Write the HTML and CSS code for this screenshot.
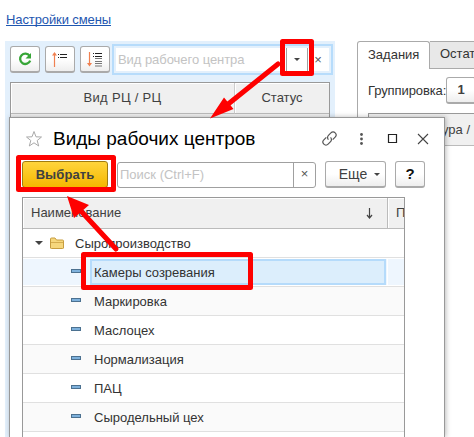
FILE: index.html
```html
<!DOCTYPE html>
<html lang="ru">
<head>
<meta charset="utf-8">
<title>Виды рабочих центров</title>
<link rel="stylesheet" href="styles.css">
</head>
<body>
<a class="settings" href="#"><span>Настройки смены</span></a>
<main class="workspace">
  <section class="centers">
    <div class="toolbar">
      <button class="btn"><svg width="16" height="16" viewBox="0 0 16 16"><path d="M12.600 4.800A5.200 5.200 0 1 0 13.200 9.600" fill="none" stroke="#37a637" stroke-width="2.300"/><path d="M14 2v5.500H8.500z" fill="#37a637"/></svg></button>
      <button class="btn"><svg width="18" height="18" viewBox="0 0 18 18"><path d="M3.500 17V3" stroke="#f08050" stroke-width="1.200"/><path d="M1 5.500h5L3.500 2z" fill="#f08050"/><path d="M7 4.500h1M9 4.500h7M7 7.500h1M9 7.500h7" stroke="#222"/></svg></button>
      <button class="btn"><svg width="18" height="18" viewBox="0 0 18 18"><path d="M3.500 2v13" stroke="#f08050" stroke-width="1.200"/><path d="M1 13h5l-2.500 3.500z" fill="#f08050"/><path d="M7 3.500h1M9 3.500h7M7 6.500h1M9 6.500h7" stroke="#222"/><path d="M9 8.500h7M9 11.500h7M9 13.500h7M9 16h7" stroke="#777"/></svg></button>
      <div class="combo"><span class="ph">Вид рабочего центра</span><span class="drop"><i class="caret"></i></span><span class="clear">×</span></div>
    </div>
    <div class="grid-head"><span>Вид РЦ / РЦ</span><span>Статус</span></div>
  </section>
  <section class="tasks">
    <div class="tabs"><div class="tab active"><span>Задания</span></div><div class="tab"><span>Остатки</span></div></div>
    <div class="tasks-body">
      <div class="grouping"><span>Группировка:</span><button class="btn">1</button></div>
      <div class="tasks-head"><span>Номенклатура /</span></div>
    </div>
  </section>
</main>

<div class="dialog">
  <header>
    <svg class="star" width="18" height="18" viewBox="0 0 18 18"><path d="M9 1.500l2 5.300 5.500.2-4.300 3.500 1.500 5.500L9 12.800 4.300 16l1.500-5.500L1.500 7l5.500-.2z" fill="none" stroke="#aaa"/></svg>
    <h1>Виды рабочих центров</h1>
    <svg width="108" height="18" viewBox="0 0 108 18"><g transform="translate(8.500 8.500) rotate(-45)" fill="none" stroke="#555" stroke-width="1.200"><path d="M-1.500-3H-5a3 3 0 0 0 0 6h3.500a3 3 0 0 0 3-3M1.500 3H5a3 3 0 0 0 0-6H1.500a3 3 0 0 0-3 3"/></g><g fill="#555"><circle cx="40.500" cy="4.500" r="1.400"/><circle cx="40.500" cy="9" r="1.400"/><circle cx="40.500" cy="13.500" r="1.400"/></g><path d="M67.500 4.500h8v8h-8z" fill="none" stroke="#222" stroke-width="1.200"/><path d="M107 4l-10 10M97 4l10 10" stroke="#444" stroke-width="1.100"/></svg>
  </header>
  <div class="commands">
    <button class="btn choose">Выбрать</button>
    <div class="search"><span class="ph">Поиск (Ctrl+F)</span><span class="clear">×</span></div>
    <button class="btn more"><span>Еще</span><i class="caret"></i></button>
    <button class="btn help">?</button>
  </div>
  <div class="list">
    <div class="list-head"><div><span>Наименование</span><svg width="9" height="12" viewBox="0 0 9 12"><path d="M4.500 1v9.500M2 8l2.500 3L7 8" fill="none" stroke="#444" stroke-width="1.200"/></svg></div><div>П</div></div>
    <div class="row folder"><div><i class="caret"></i><svg width="16" height="14" viewBox="0 0 16 14"><path d="M1.500 12V3q0-1 1-1h3.500l1.500 2h6q1 0 1 1v7q0 .5-1 .5h-11q-1 0-1-.5z" fill="#f6d77d" stroke="#c79d3f"/><path d="M2 6.500h12" stroke="#d5ad50"/></svg><span>Сыропроизводство</span></div><div></div></div>
    <div class="row selected"><div><i class="dash"></i><span class="cell">Камеры созревания</span></div><div></div></div>
    <div class="row alt"><div><i class="dash"></i><span>Маркировка</span></div><div></div></div>
    <div class="row"><div><i class="dash"></i><span>Маслоцех</span></div><div></div></div>
    <div class="row alt"><div><i class="dash"></i><span>Нормализация</span></div><div></div></div>
    <div class="row"><div><i class="dash"></i><span>ПАЦ</span></div><div></div></div>
    <div class="row alt"><div><i class="dash"></i><span>Сыродельный цех</span></div><div></div></div>
  </div>
</div>

<svg class="marks" width="474" height="437" viewBox="0 0 474 437">
  <g fill="none" stroke="#fe0000" stroke-width="5" stroke-linejoin="round">
    <path d="M282.500 41.500h29v32h-29zM18.500 157.500h95v32h-95zM83.500 254.500h167v33h-167z"/>
    <path d="M278 64L227 105M116 249L80 210" stroke-linecap="round"/>
  </g>
  <path d="M210 118.500l14-21 9.500 11.500zM67 196l7 22 15-13z" fill="#fe0000"/>
</svg>
</body>
</html>
```
FILE: styles.css
```css
* { box-sizing: border-box; }
body {
  margin: 0; width: 474px; height: 437px; overflow: hidden; position: relative;
  background: #fff; color: #404040;
  font: 13px/16px "Liberation Sans", Arial, sans-serif;
}
.settings { display: block; height: 41px; padding: 12px 0 0 6px; color: #1e56b0; text-decoration: none; letter-spacing: -.1px; }
.settings span { display: inline-block; height: 14px; line-height: 15px; border-bottom: 1px solid #1e56b0; }
.workspace { display: flex; gap: 22px; height: 396px; }
.centers { width: 330px; flex: none; margin-left: 5px; background: #e3f0fc; padding: 3px 2px 0 5px; }
.toolbar { display: flex; gap: 5px; height: 31px; align-items: center; }
.btn {
  display: flex; align-items: center; justify-content: center; flex: none;
  width: 30px; height: 27px; padding: 0; border: 1px solid #aaa; border-bottom: 2px solid #aaa; border-radius: 3px;
  background: linear-gradient(#fff 50%, #eee); color: #404040; font: inherit;
}
.combo {
  display: flex; align-items: center; width: 221px; height: 31px; margin-left: -3px;
  border: 2px solid #b7dcfb; background: #fff; box-shadow: inset 0 0 0 2px #e3f0fc; padding: 2px 3px;
}
.ph { flex: 1; color: #c3c3c3; white-space: nowrap; }
.combo .ph { padding-left: 1px; letter-spacing: -.05px; }
.drop { width: 22px; height: 23px; border: solid #a0a0a0; border-width: 0 1px; display: flex; align-items: center; justify-content: center; }
.caret { flex: none; border: solid transparent; border-width: 3px 3px 0; border-top-color: #444; }
.clear { width: 20px; text-align: center; color: #555; }
.grid-head {
  display: grid; grid-template-columns: 223px 1fr; width: 320px; height: 330px; margin-top: 7px;
  border: 1px solid #999; background: #f0f0f0; grid-template-rows: 31px;
}
.grid-head span { display: flex; align-items: center; justify-content: center; border-bottom: 1px solid #bbb; box-shadow: inset 1px 1px #fff; letter-spacing: .3px; }
.grid-head span + span { border-left: 1px solid #ccc; letter-spacing: 0; }
.tasks { flex: none; width: 117px; overflow: hidden; }
.tabs { display: flex; height: 28px; }
.tab { width: 72px; flex: none; display: flex; align-items: center; padding: 0 0 2px 10px; border: 1px solid #aaa; border-left: 0; background: #e8e8e8; color: #333; }
.tab.active { width: 73px; border: 1px solid #aaa; border-bottom: 0; border-radius: 3px 3px 0 0; background: #fff; }
.tasks-body { border-left: 1px solid #aaa; height: 368px; padding: 8px 0 0 10px; }
.grouping { display: flex; align-items: center; height: 27px; white-space: nowrap; color: #333; }
.grouping span { width: 79px; letter-spacing: -.1px; }
.grouping .btn { font-weight: bold; }
.tasks-head { height: 33px; margin-top: 9px; display: flex; align-items: center; border: solid #999; border-width: 1px 0 0 1px; border-bottom: 1px solid #bbb; background: #f0f0f0; white-space: nowrap; }
.tasks-head span { width: 101px; text-align: right; }

.dialog {
  position: absolute; left: 9px; top: 117px; width: 436px; height: 320px;
  border: 1px solid #999; border-bottom: 0; background: #fff; box-shadow: 1px 0 5px #0004; padding: 0 15px 0 12px; overflow: hidden;
}
.dialog header { display: flex; align-items: center; height: 41px; padding-left: 3px; }
h1 { margin: 0 0 0 10px; flex: 1; font-size: 19px; line-height: 24px; font-weight: normal; color: #000; white-space: nowrap; }
.dialog header svg { flex: none; }
.commands { display: flex; align-items: center; margin-top: 2px; height: 27px; }
.choose { width: 86px; font-weight: bold; font-size: 13px; letter-spacing: .1px; border-color: #a07c10; border-bottom-width: 1px; background: linear-gradient(#ffd43c, #f5b800); }
.search { width: 199px; height: 26px; margin-left: 9px; display: flex; align-items: center; border: 1px solid #a0a0a0; border-radius: 3px; }
.search .ph { padding-left: 2px; }
.search .clear { width: 22px; height: 24px; line-height: 22px; border-left: 1px solid #a0a0a0; }
.more { width: 61px; margin-left: 9px; gap: 7px; font-size: 14px; padding-left: 8px; }
.help { margin-left: 9px; font-weight: bold; font-size: 15px; color: #111; }
.list { width: 383px; margin-top: 9px; border: solid #999; border-width: 1px 1px 0; height: 240px; }
.list-head, .row { display: grid; grid-template-columns: 364px 17px; height: 29px; border-bottom: 1px solid #e0e0e0; overflow: hidden; }
.list-head { height: 31px; background: #f0f0f0; border-color: #bbb; }
.list-head div { display: flex; align-items: center; padding-left: 8px; box-shadow: inset 1px 1px #fff; }
.list-head div + div { border-left: 1px solid #bbb; overflow: hidden; }
.list-head div:first-child { justify-content: space-between; padding-right: 13px; }
.row > div { display: flex; align-items: center; color: #333; min-width: 0; }
.row > div > span { position: relative; top: 1px; }
.row.alt { background: #fafafa; }
.folder .caret { margin: 0 11px 0 12px; border-width: 4px 4px 0; }
.folder div span { margin-left: 10px; }
.row.folder .caret + svg { margin-left: -5px; }
.dash { flex: none; width: 10px; height: 4px; margin: -2px 13px 0 48px; border: 1px solid #4c7190; background: #7eb1dc; }
.selected > div { margin: 1px 0; background: #eef6fe; }
.selected .dash { margin-right: 9px; }
.row .cell { top: 0; flex: 1; height: 26px; line-height: 23px; border: 2px solid #b5dbfb; background: #dceefc; padding-left: 2px; margin-right: 1px; }
.selected > div + div { margin-left: 1px; }
.marks { position: absolute; left: 0; top: 0; }
```
